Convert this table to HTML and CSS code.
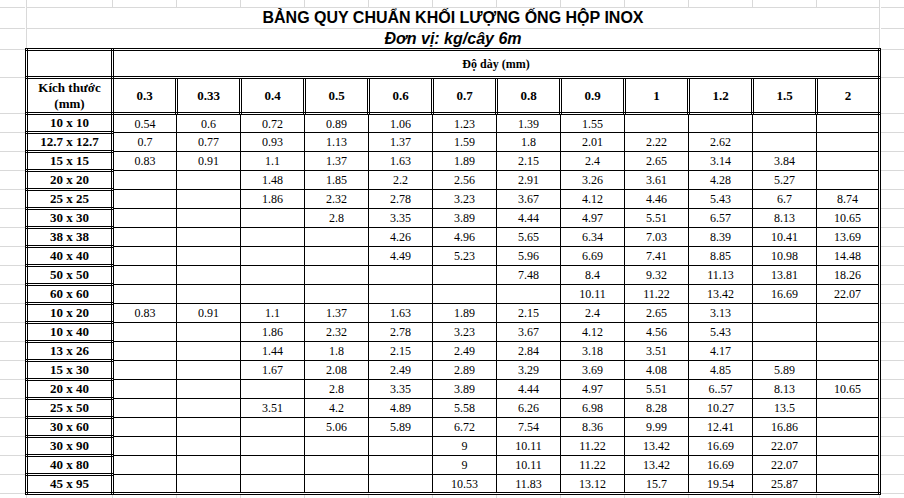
FILE: index.html
```html
<!DOCTYPE html>
<html lang="vi">
<head>
<meta charset="utf-8">
<title>Bảng quy chuẩn khối lượng ống hộp inox</title>
<link rel="stylesheet" href="styles.css">
</head>
<body>
<div class="sheet">
  <div class="gutter gutter-left">
    <div class="g g0"></div><div class="g g1"></div><div class="g g2"></div><div class="g g3"></div><div class="g g4"></div>
    <div class="g gd"></div><div class="g gd"></div><div class="g gd"></div><div class="g gd"></div><div class="g gd"></div>
    <div class="g gd"></div><div class="g gd"></div><div class="g gd"></div><div class="g gd"></div><div class="g gd"></div>
    <div class="g gd"></div><div class="g gd"></div><div class="g gd"></div><div class="g gd"></div><div class="g gd"></div>
    <div class="g gd"></div><div class="g gd"></div><div class="g gd"></div><div class="g gd"></div><div class="g gd"></div>
  </div>
  <div class="main">
    <div class="strip strip-top">
      <div class="c first"></div><div class="c"></div><div class="c"></div><div class="c"></div><div class="c"></div><div class="c"></div><div class="c"></div><div class="c"></div><div class="c"></div><div class="c"></div><div class="c"></div><div class="c"></div><div class="c last"></div>
    </div>
    <div class="title">BẢNG QUY CHUẨN KHỐI LƯỢNG ỐNG HỘP INOX</div>
    <div class="subtitle">Đơn vị: kg/cây 6m</div>
    <table class="grid">
      <colgroup>
        <col class="col-size">
        <col class="col-v"><col class="col-v"><col class="col-v"><col class="col-v"><col class="col-v"><col class="col-v">
        <col class="col-v"><col class="col-v"><col class="col-v"><col class="col-v"><col class="col-v"><col class="col-n">
      </colgroup>
      <tr class="r-h1"><td class="h"></td><td class="h h-sm" colspan="12">Độ dày (mm)</td></tr>
      <tr class="r-h2"><td class="h">Kích thước<br>(mm)</td><td class="h">0.3</td><td class="h">0.33</td><td class="h">0.4</td><td class="h">0.5</td><td class="h">0.6</td><td class="h">0.7</td><td class="h">0.8</td><td class="h">0.9</td><td class="h">1</td><td class="h">1.2</td><td class="h">1.5</td><td class="h">2</td></tr>
      <tr><td class="h">10 x 10</td><td>0.54</td><td>0.6</td><td>0.72</td><td>0.89</td><td>1.06</td><td>1.23</td><td>1.39</td><td>1.55</td><td></td><td></td><td></td><td></td></tr>
      <tr><td class="h">12.7 x 12.7</td><td>0.7</td><td>0.77</td><td>0.93</td><td>1.13</td><td>1.37</td><td>1.59</td><td>1.8</td><td>2.01</td><td>2.22</td><td>2.62</td><td></td><td></td></tr>
      <tr><td class="h">15 x 15</td><td>0.83</td><td>0.91</td><td>1.1</td><td>1.37</td><td>1.63</td><td>1.89</td><td>2.15</td><td>2.4</td><td>2.65</td><td>3.14</td><td>3.84</td><td></td></tr>
      <tr><td class="h">20 x 20</td><td></td><td></td><td>1.48</td><td>1.85</td><td>2.2</td><td>2.56</td><td>2.91</td><td>3.26</td><td>3.61</td><td>4.28</td><td>5.27</td><td></td></tr>
      <tr><td class="h">25 x 25</td><td></td><td></td><td>1.86</td><td>2.32</td><td>2.78</td><td>3.23</td><td>3.67</td><td>4.12</td><td>4.46</td><td>5.43</td><td>6.7</td><td>8.74</td></tr>
      <tr><td class="h">30 x 30</td><td></td><td></td><td></td><td>2.8</td><td>3.35</td><td>3.89</td><td>4.44</td><td>4.97</td><td>5.51</td><td>6.57</td><td>8.13</td><td>10.65</td></tr>
      <tr><td class="h">38 x 38</td><td></td><td></td><td></td><td></td><td>4.26</td><td>4.96</td><td>5.65</td><td>6.34</td><td>7.03</td><td>8.39</td><td>10.41</td><td>13.69</td></tr>
      <tr><td class="h">40 x 40</td><td></td><td></td><td></td><td></td><td>4.49</td><td>5.23</td><td>5.96</td><td>6.69</td><td>7.41</td><td>8.85</td><td>10.98</td><td>14.48</td></tr>
      <tr><td class="h">50 x 50</td><td></td><td></td><td></td><td></td><td></td><td></td><td>7.48</td><td>8.4</td><td>9.32</td><td>11.13</td><td>13.81</td><td>18.26</td></tr>
      <tr><td class="h">60 x 60</td><td></td><td></td><td></td><td></td><td></td><td></td><td></td><td>10.11</td><td>11.22</td><td>13.42</td><td>16.69</td><td>22.07</td></tr>
      <tr><td class="h">10 x 20</td><td>0.83</td><td>0.91</td><td>1.1</td><td>1.37</td><td>1.63</td><td>1.89</td><td>2.15</td><td>2.4</td><td>2.65</td><td>3.13</td><td></td><td></td></tr>
      <tr><td class="h">10 x 40</td><td></td><td></td><td>1.86</td><td>2.32</td><td>2.78</td><td>3.23</td><td>3.67</td><td>4.12</td><td>4.56</td><td>5.43</td><td></td><td></td></tr>
      <tr><td class="h">13 x 26</td><td></td><td></td><td>1.44</td><td>1.8</td><td>2.15</td><td>2.49</td><td>2.84</td><td>3.18</td><td>3.51</td><td>4.17</td><td></td><td></td></tr>
      <tr><td class="h">15 x 30</td><td></td><td></td><td>1.67</td><td>2.08</td><td>2.49</td><td>2.89</td><td>3.29</td><td>3.69</td><td>4.08</td><td>4.85</td><td>5.89</td><td></td></tr>
      <tr><td class="h">20 x 40</td><td></td><td></td><td></td><td>2.8</td><td>3.35</td><td>3.89</td><td>4.44</td><td>4.97</td><td>5.51</td><td>6..57</td><td>8.13</td><td>10.65</td></tr>
      <tr><td class="h">25 x 50</td><td></td><td></td><td>3.51</td><td>4.2</td><td>4.89</td><td>5.58</td><td>6.26</td><td>6.98</td><td>8.28</td><td>10.27</td><td>13.5</td><td></td></tr>
      <tr><td class="h">30 x 60</td><td></td><td></td><td></td><td>5.06</td><td>5.89</td><td>6.72</td><td>7.54</td><td>8.36</td><td>9.99</td><td>12.41</td><td>16.86</td><td></td></tr>
      <tr><td class="h">30 x 90</td><td></td><td></td><td></td><td></td><td></td><td>9</td><td>10.11</td><td>11.22</td><td>13.42</td><td>16.69</td><td>22.07</td><td></td></tr>
      <tr><td class="h">40 x 80</td><td></td><td></td><td></td><td></td><td></td><td>9</td><td>10.11</td><td>11.22</td><td>13.42</td><td>16.69</td><td>22.07</td><td></td></tr>
      <tr><td class="h">45 x 95</td><td></td><td></td><td></td><td></td><td></td><td>10.53</td><td>11.83</td><td>13.12</td><td>15.7</td><td>19.54</td><td>25.87</td><td></td></tr>
    </table>
    <div class="strip strip-bottom">
      <div class="c first"></div><div class="c"></div><div class="c"></div><div class="c"></div><div class="c"></div><div class="c"></div><div class="c"></div><div class="c"></div><div class="c"></div><div class="c"></div><div class="c"></div><div class="c"></div><div class="c last"></div>
    </div>
  </div>
  <div class="gutter gutter-right">
    <div class="g g0"></div><div class="g g1"></div><div class="g g2"></div><div class="g g3"></div><div class="g g4"></div>
    <div class="g gd"></div><div class="g gd"></div><div class="g gd"></div><div class="g gd"></div><div class="g gd"></div>
    <div class="g gd"></div><div class="g gd"></div><div class="g gd"></div><div class="g gd"></div><div class="g gd"></div>
    <div class="g gd"></div><div class="g gd"></div><div class="g gd"></div><div class="g gd"></div><div class="g gd"></div>
    <div class="g gd"></div><div class="g gd"></div><div class="g gd"></div><div class="g gd"></div><div class="g gd"></div>
  </div>
</div>
</body>
</html>
```

FILE: styles.css
```css
* { box-sizing: border-box; }
html, body { margin: 0; padding: 0; background: #fff; }
body { width: 904px; height: 498px; overflow: hidden; color: #000; }

.sheet { display: flex; align-items: flex-start; }

.gutter { display: flex; flex-direction: column; }
.gutter-left { width: 25px; flex: none; }
.gutter-right { flex: 1; }
.g { border-bottom: 1px solid #d9d9d9; flex: none; }
.g0 { height: 8px; }
.g1 { height: 21px; }
.g2 { height: 21px; }
.g3 { height: 28px; }
.g4 { height: 36px; }
.gd { height: 19px; }

.main { width: 856px; flex: none; display: flex; flex-direction: column; }

.strip {
  display: flex;
  margin: 0 1px;
  border-left: 1px solid #d9d9d9;
  border-right: 1px solid #d9d9d9;
}
.strip-top { height: 8px; border-bottom: 1px solid #d9d9d9; }
.strip-bottom { height: 10px; }
.strip .c { width: 64px; flex: none; border-right: 1px solid #d9d9d9; }
.strip .c.first { width: 86px; }
.strip .c.last { flex: 1; border-right: 0; }

.title {
  margin: 0 1px;
  height: 21px;
  border-left: 1px solid #d9d9d9;
  border-right: 1px solid #d9d9d9;
  border-bottom: 1px solid #d9d9d9;
  font-family: "Liberation Sans", Arial, sans-serif;
  font-weight: bold;
  font-size: 16px;
  line-height: 20px;
  text-align: center;
}
.subtitle {
  margin: 0 1px;
  height: 19px;
  border-left: 1px solid #d9d9d9;
  border-right: 1px solid #d9d9d9;
  font-family: "Liberation Sans", Arial, sans-serif;
  font-weight: bold;
  font-style: italic;
  font-size: 16px;
  line-height: 19px;
  text-align: center;
}

.grid {
  border-collapse: collapse;
  table-layout: fixed;
  width: 856px;
  border: 3px double #000;
  font-family: "Liberation Serif", "Times New Roman", serif;
  font-size: 12px;
}
.col-size { width: 86px; }
.col-v { width: 64px; }
.col-n { width: 63px; }

.grid td {
  border: 1px solid #000;
  padding: 0;
  text-align: center;
  vertical-align: middle;
  height: 19px;
  line-height: 14px;
  white-space: nowrap;
}
.grid td.h {
  border: 3px double #000;
  font-weight: bold;
  font-size: 13px;
}
.grid td.h-sm { font-size: 12px; }
.grid .r-h1 td { height: 28px; }
.grid .r-h2 td { height: 36px; line-height: 16px; }
```
